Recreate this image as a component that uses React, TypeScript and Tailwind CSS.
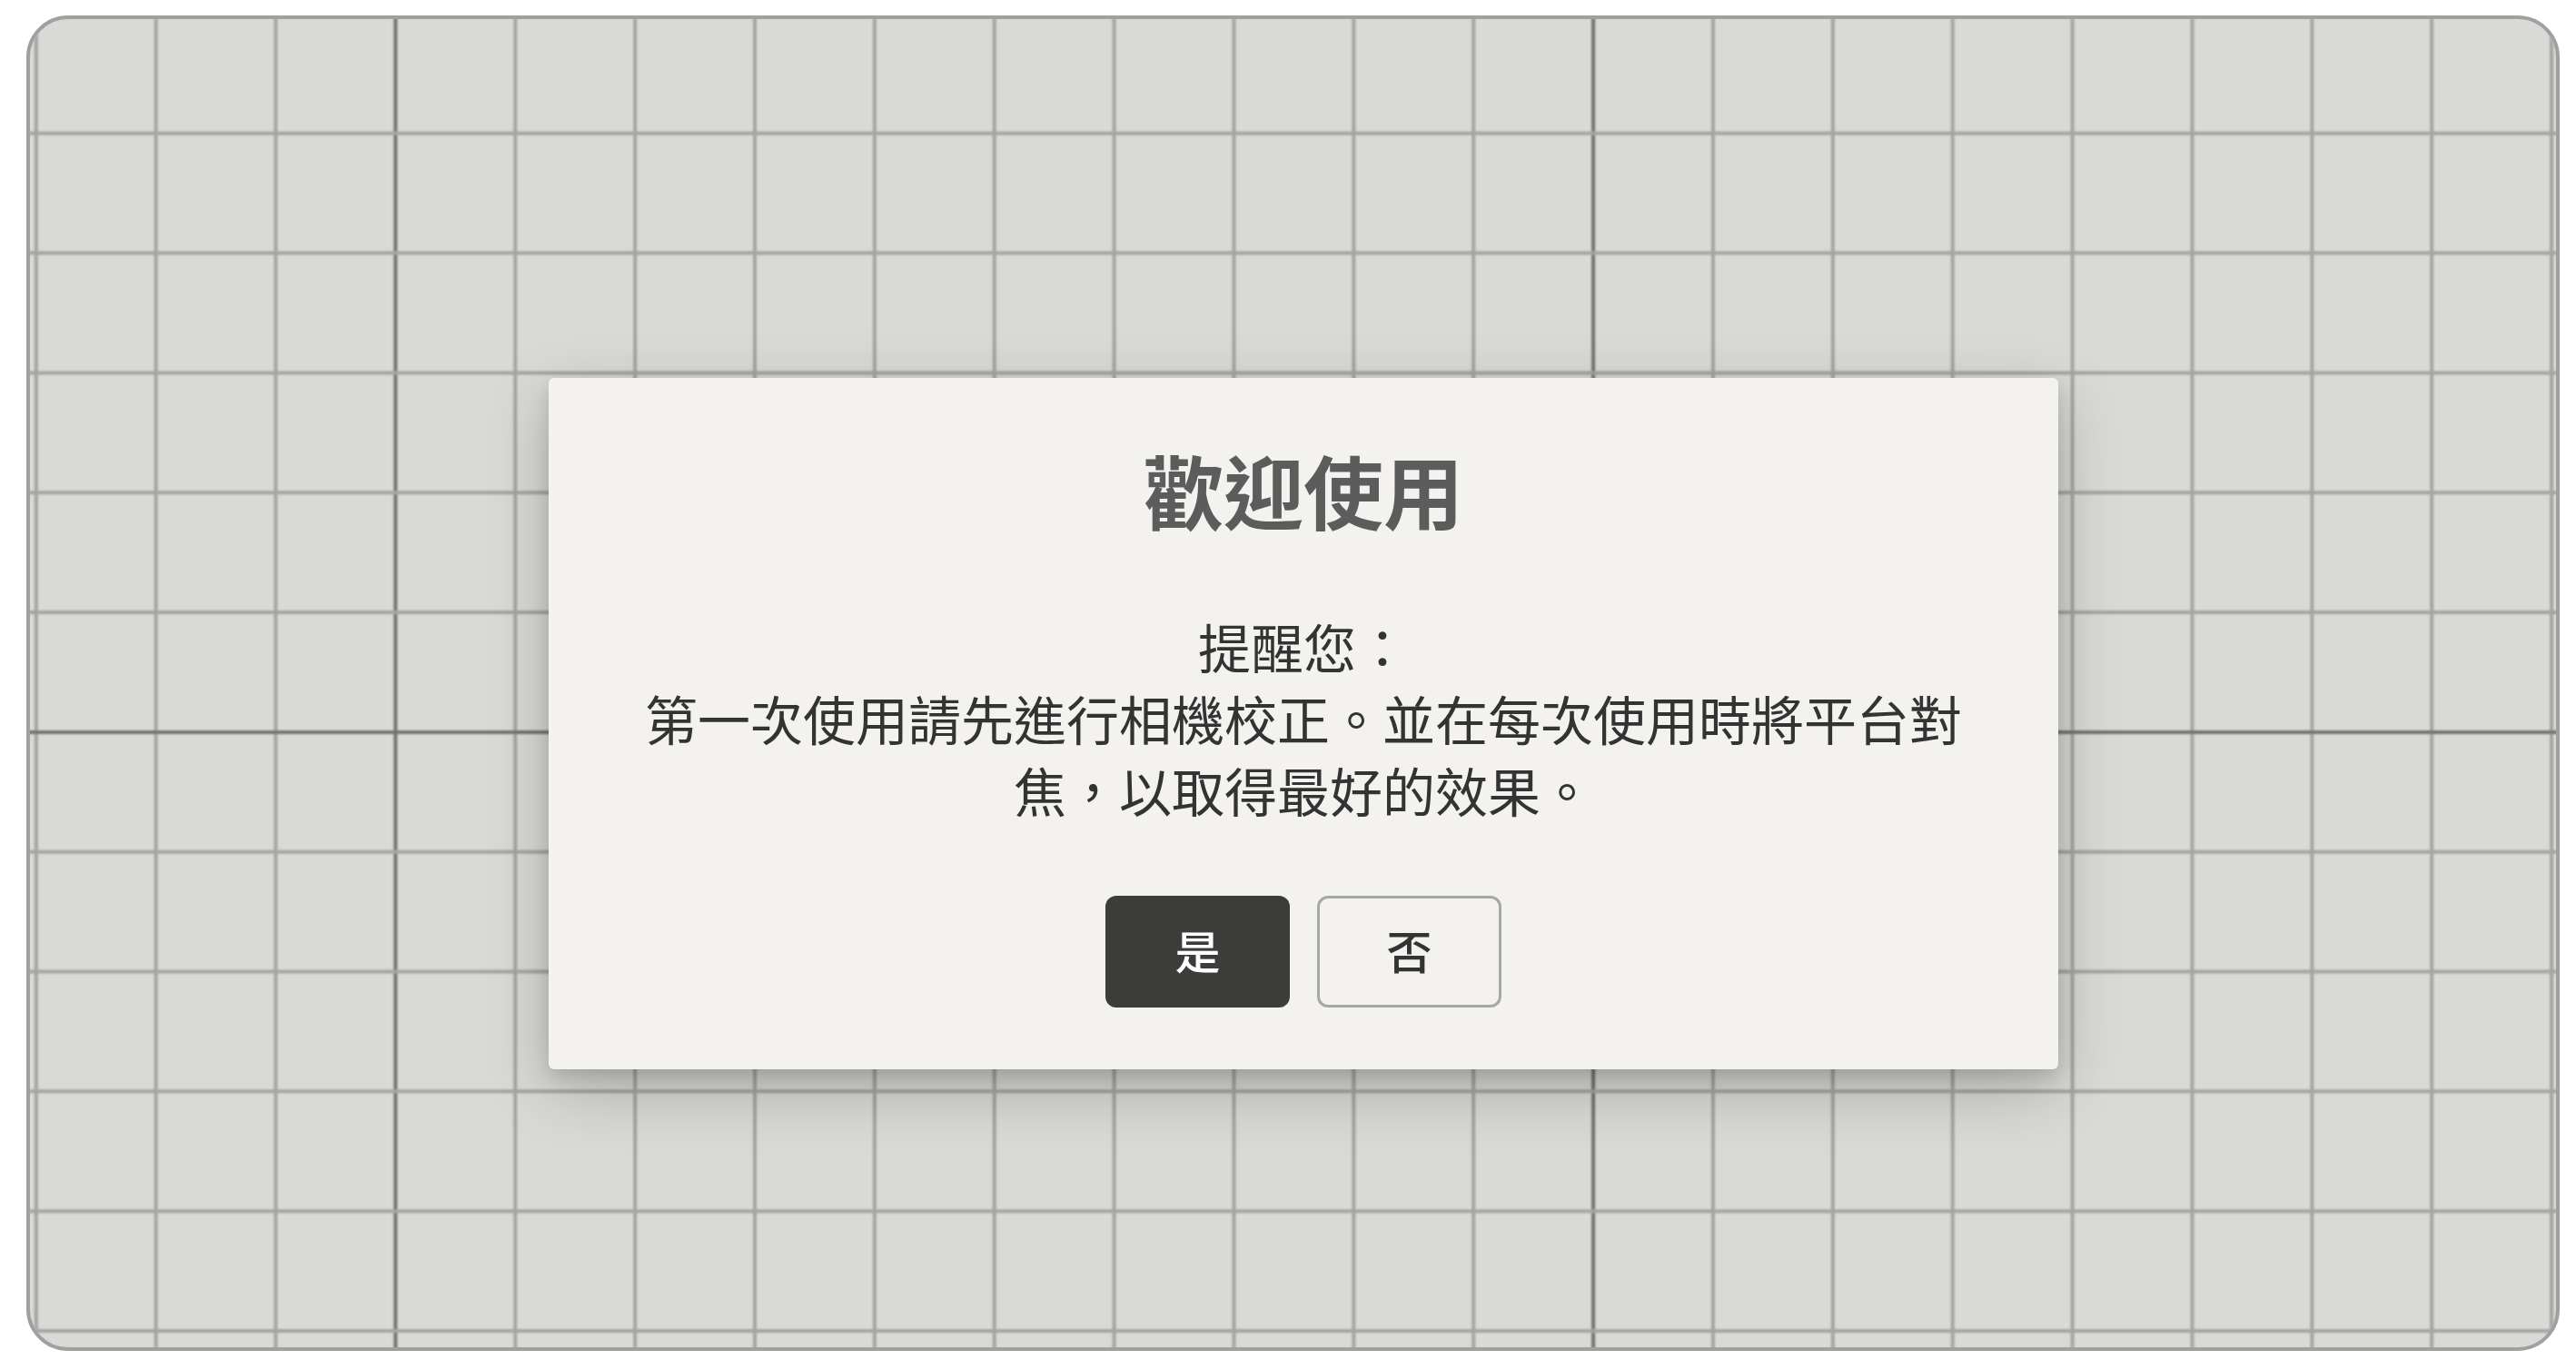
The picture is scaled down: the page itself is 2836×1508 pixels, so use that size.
import React from "react";

const CJK = "font-['Noto_Sans_CJK_TC','Noto_Sans',sans-serif]";

// calibration grid behind the dialog
function GridCanvas() {
  const cols = Array.from({ length: 22 }, (_, k) => ({ x: 6.8 + 131.87 * k, major: k === 3 || k === 13 }));
  const rows = Array.from({ length: 12 }, (_, k) => ({ y: -6.1 + 131.83 * k, major: k === 6 }));

  return (
    <svg className="absolute inset-0 h-full w-full" width="2781" height="1462" aria-hidden>
      <defs>
        <filter id="soft" x="-1%" y="-1%" width="102%" height="102%">
          <feGaussianBlur stdDeviation="0.9" />
        </filter>
      </defs>
      <g filter="url(#soft)">
        {cols.map((c) => (
          <line
            key={`c${c.x}`}
            x1={c.x}
            x2={c.x}
            y1={-10}
            y2={1472}
            stroke={c.major ? "#727372" : "#a4a5a3"}
            strokeWidth={4}
          />
        ))}
        {rows.map((r) => (
          <line
            key={`r${r.y}`}
            x1={-10}
            x2={2791}
            y1={r.y}
            y2={r.y}
            stroke={r.major ? "#727372" : "#a4a5a3"}
            strokeWidth={4}
          />
        ))}
      </g>
    </svg>
  );
}

function WelcomeDialog() {
  return (
    <div
      className={`absolute left-[571px] top-[395px] flex w-[1662px] flex-col items-center rounded-[6px] bg-[#f3f2ef] px-[91px] pb-[68px] pt-[72px] shadow-[0_8px_18px_rgba(0,0,0,0.12),0_22px_70px_rgba(0,0,0,0.22)] ${CJK}`}
    >
      <h1 className="text-[88px] font-bold leading-[100px] text-[#5b5c5c]">歡迎使用</h1>

      <div className="mt-[84px] w-[1480px] text-center text-[58px] font-normal leading-[79px] text-[#333333]">
        <p>提醒您：</p>
        <p>第一次使用請先進行相機校正。並在每次使用時將平台對焦，以取得最好的效果。</p>
      </div>

      <div className="mt-[77px] flex gap-[30px]">
        <button className="flex h-[123px] w-[203px] items-center justify-center rounded-[12px] bg-[#3c3c3b] pb-[4px] text-[50px] font-medium text-white">
          是
        </button>
        <button className="flex h-[123px] w-[203px] items-center justify-center rounded-[12px] border-[3px] border-[#a7a7a6] bg-transparent pb-[4px] text-[50px] font-medium text-[#333333]">
          否
        </button>
      </div>
    </div>
  );
}

export default function App() {
  return (
    <div className="h-[1508px] w-full bg-white pl-[29px] pt-[17px]">
      <div className="relative h-[1470px] w-[2789px] overflow-hidden rounded-[46px] border-4 border-[#a0a0a0] bg-[#d9d9d5]">
        <GridCanvas />
        <WelcomeDialog />
      </div>
    </div>
  );
}
